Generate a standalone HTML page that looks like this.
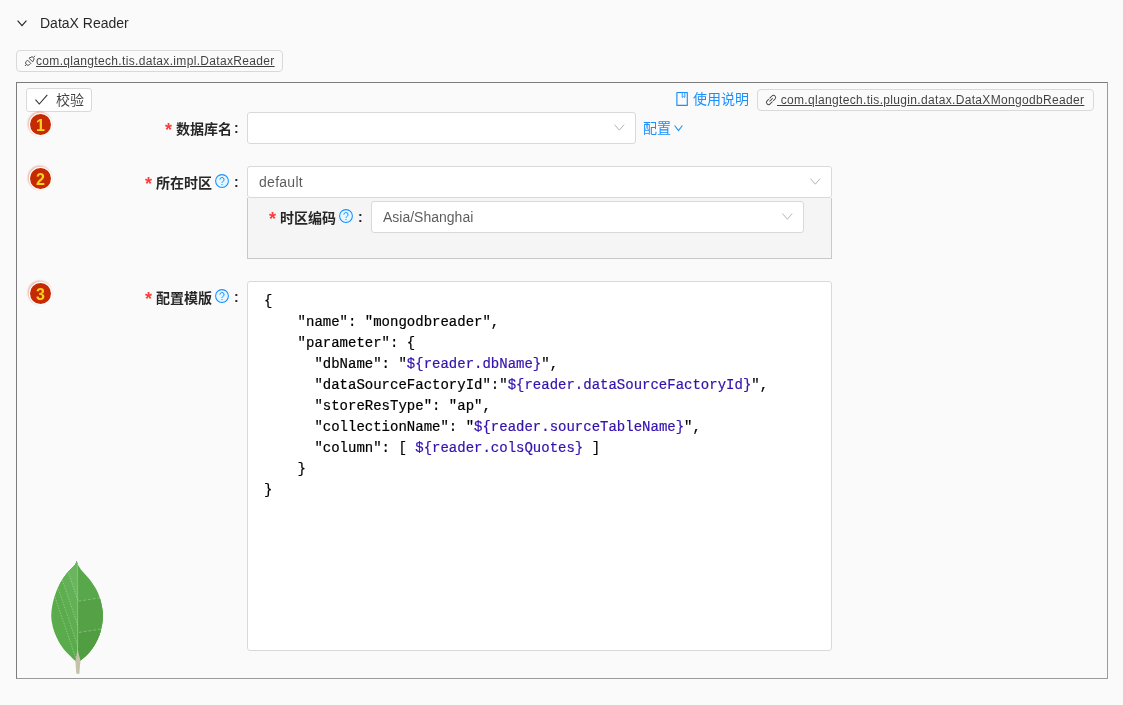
<!DOCTYPE html>
<html lang="zh-CN">
<head>
<meta charset="utf-8">
<title>DataX Reader</title>
<style>
html,body{margin:0;padding:0;}
body{width:1123px;height:705px;overflow:hidden;background:#fafafa;position:relative;
  font-family:"Liberation Sans","Noto Sans CJK SC",sans-serif;font-size:14px;color:rgba(0,0,0,.85);}
.abs{position:absolute;white-space:nowrap;}
.hdr{left:40px;top:12px;height:22px;line-height:22px;font-size:14px;color:rgba(0,0,0,.85);}
.tag{box-sizing:border-box;border:1px solid #d9d9d9;border-radius:4px;background:#fafafa;font-size:12px;line-height:20px;height:22px;color:rgba(0,0,0,.75);letter-spacing:.33px;}
.tag u{text-decoration:underline;text-underline-offset:1px;white-space:pre;}
.main{left:16px;top:82px;width:1092px;height:597px;box-sizing:border-box;border:1px solid #9a9a9a;border-top-color:#7c7c7c;border-left-color:#7c7c7c;}
.btn{box-sizing:border-box;left:26px;top:88px;width:66px;height:24px;border:1px solid #d9d9d9;border-radius:3px;background:#fff;}
.badge{width:21px;height:21px;border-radius:50%;background:#c62a02;color:#ffd21e;font-weight:bold;font-size:16px;line-height:23px;text-align:center;box-shadow:0 0 0 1.2px rgba(255,255,255,.95),-0.8px -0.8px 1.5px 1.6px rgba(198,42,2,.3);}
.lbl{font-weight:bold;font-size:14px;line-height:32px;height:32px;color:rgba(0,0,0,.85);}
.star{color:#fa3b3d;font-family:"Liberation Sans",sans-serif;font-size:18px;line-height:32px;height:32px;font-weight:bold;}
.sel{box-sizing:border-box;border:1px solid #d9d9d9;border-radius:3px;background:#fff;height:32px;line-height:30px;padding-left:11px;font-size:14px;color:rgba(0,0,0,.65);}
.sub{box-sizing:border-box;left:247px;top:198px;width:585px;height:61px;background:#f5f5f5;border:1px solid #c9c9c9;border-top:none;}
.code{box-sizing:border-box;left:247px;top:281px;width:585px;height:370px;border:1px solid #d9d9d9;border-radius:3px;background:#fff;}
pre{margin:0;position:absolute;left:16px;top:9px;font-family:"Liberation Mono",monospace;font-size:14px;line-height:21px;color:#000;-webkit-text-stroke:.2px;}
pre i{font-style:normal;color:#3512ad;}
.blue{color:#1890ff;}
svg{position:absolute;overflow:visible;}
</style>
</head>
<body>
<div id="root" style="position:absolute;left:0;top:0;width:1123px;height:705px;will-change:transform;">

<!-- header -->
<svg style="left:17px;top:20px" width="10" height="7" viewBox="0 0 10 7"><path d="M0.6 0.6 L5 5.6 L9.4 0.6" fill="none" stroke="#222" stroke-width="1.1"/></svg>
<div class="abs hdr">DataX Reader</div>

<div class="abs tag" style="left:16px;top:50px;width:267px;padding-left:19px;"><u>com.qlangtech.tis.datax.impl.DataxReader</u></div>
<svg style="left:24px;top:55px" width="12" height="12" viewBox="0 0 12 12"><g transform="translate(6 5.9) rotate(-45)" fill="none" stroke="#444" stroke-width="0.9"><path d="M-7.2 0 H-5.2 M-1.2 -2.3 V2.3 H-2.9 A2.3 2.3 0 0 1 -2.9 -2.3 Z M7.2 0 H5.2 M1.2 -2.6 V2.6 L4.4 1.5 Q5.2 0 4.4 -1.5 Z"/></g></svg>

<div class="abs main"></div>

<!-- validate button -->
<div class="abs btn"></div>
<svg style="left:35px;top:94px" width="13" height="11" viewBox="0 0 13 11"><path d="M0.5 5.6 L4.3 10 L12.3 0.8" fill="none" stroke="#333" stroke-width="1.1"/></svg>
<div class="abs" style="left:56px;top:90px;line-height:21px;font-size:14px;color:rgba(0,0,0,.75)">校验</div>

<!-- top-right -->
<svg style="left:676px;top:91px" width="13" height="16" viewBox="676 91 13 16"><path d="M676.9 92.5 H687.3 V105.4 H676.9 Z" fill="none" stroke="#1890ff" stroke-width="1.15" stroke-linejoin="round"/><path d="M682.2 92.5 V97.5 L683.5 96.4 L684.8 97.5 V92.5" fill="none" stroke="#1890ff" stroke-width="0.9"/></svg>
<div class="abs blue" style="left:693px;top:88px;line-height:22px;font-size:14px;">使用说明</div>
<div class="abs tag" style="left:757px;top:89px;width:337px;padding-left:19px;"><u> com.qlangtech.tis.plugin.datax.DataXMongodbReader</u></div>
<svg style="left:765px;top:94px" width="12" height="12" viewBox="0 0 12 12"><g transform="translate(6.05 5.95) rotate(-45) scale(.86)" fill="none" stroke="#444" stroke-width="1.1"><path d="M-1 -2.5 H-4 A2.5 2.5 0 0 0 -4 2.5 H0 M1 2.5 H4 A2.5 2.5 0 0 0 4 -2.5 H0 M-2.6 0 H2.6"/></g></svg>

<!-- row 1 -->
<div class="abs badge" style="left:30px;top:114px;">1</div>
<div class="abs star" style="left:165px;top:114px;">*</div>
<div class="abs lbl" style="left:176px;top:113px;">数据库名</div>
<div class="abs lbl" style="left:234px;top:112px;">:</div>
<div class="abs sel" style="left:247px;top:112px;width:389px;"></div>
<svg style="left:614px;top:124px" width="11" height="7" viewBox="0 0 11 7"><path d="M0.5 0.6 L5.3 6.2 L10.1 0.6" fill="none" stroke="#b5b5b5" stroke-width="1"/></svg>
<div class="abs blue" style="left:643px;top:117px;line-height:22px;">配置</div>
<svg style="left:674px;top:125px" width="9" height="7" viewBox="0 0 9 7"><path d="M0.6 0.5 L4.5 5.6 L8.4 0.5" fill="none" stroke="#1890ff" stroke-width="1.1"/></svg>

<!-- row 2 -->
<div class="abs badge" style="left:30px;top:168px;">2</div>
<div class="abs star" style="left:145px;top:168px;">*</div>
<div class="abs lbl" style="left:156px;top:167px;">所在时区</div>
<svg style="left:215px;top:174px" width="14" height="14" viewBox="0 0 14 14"><circle cx="7" cy="7" r="6.4" fill="#e6f7ff" stroke="#1890ff" stroke-width="1.05"/><path d="M4.9 5.6 a2.1 2.1 0 1 1 2.9 1.9 q-0.8 0.4 -0.8 1.3 M7 10 v1.1" fill="none" stroke="#1890ff" stroke-width="1"/></svg>
<div class="abs lbl" style="left:234px;top:166px;">:</div>
<div class="abs sel" style="left:247px;top:166px;width:585px;letter-spacing:.28px">default</div>
<svg style="left:810px;top:178px" width="11" height="7" viewBox="0 0 11 7"><path d="M0.5 0.6 L5.3 6.2 L10.1 0.6" fill="none" stroke="#b5b5b5" stroke-width="1"/></svg>

<div class="abs sub"></div>
<div class="abs star" style="left:269px;top:203px;">*</div>
<div class="abs lbl" style="left:280px;top:202px;">时区编码</div>
<svg style="left:339px;top:209px" width="14" height="14" viewBox="0 0 14 14"><circle cx="7" cy="7" r="6.4" fill="#e6f7ff" stroke="#1890ff" stroke-width="1.05"/><path d="M4.9 5.6 a2.1 2.1 0 1 1 2.9 1.9 q-0.8 0.4 -0.8 1.3 M7 10 v1.1" fill="none" stroke="#1890ff" stroke-width="1"/></svg>
<div class="abs lbl" style="left:358px;top:201px;">:</div>
<div class="abs sel" style="left:371px;top:201px;width:433px;">Asia/Shanghai</div>
<svg style="left:782px;top:213px" width="11" height="7" viewBox="0 0 11 7"><path d="M0.5 0.6 L5.3 6.2 L10.1 0.6" fill="none" stroke="#b5b5b5" stroke-width="1"/></svg>

<!-- row 3 -->
<div class="abs badge" style="left:30px;top:283px;">3</div>
<div class="abs star" style="left:145px;top:283px;">*</div>
<div class="abs lbl" style="left:156px;top:282px;">配置模版</div>
<svg style="left:215px;top:289px" width="14" height="14" viewBox="0 0 14 14"><circle cx="7" cy="7" r="6.4" fill="#e6f7ff" stroke="#1890ff" stroke-width="1.05"/><path d="M4.9 5.6 a2.1 2.1 0 1 1 2.9 1.9 q-0.8 0.4 -0.8 1.3 M7 10 v1.1" fill="none" stroke="#1890ff" stroke-width="1"/></svg>
<div class="abs lbl" style="left:234px;top:281px;">:</div>
<div class="abs code"><pre>{
    "name": "mongodbreader",
    "parameter": {
      "dbName": "<i>${reader.dbName}</i>",
      "dataSourceFactoryId":"<i>${reader.dataSourceFactoryId}</i>",
      "storeResType": "ap",
      "collectionName": "<i>${reader.sourceTableName}</i>",
      "column": [ <i>${reader.colsQuotes}</i> ]
    }
}</pre></div>

<!-- leaf -->
<svg style="left:45px;top:555px" width="65" height="125" viewBox="45 555 65 125">
  <defs>
    <clipPath id="lfL"><path d="M76.5 561.0 C76.2 561.6 76.4 562.9 75.0 564.7 C73.6 566.6 70.2 569.4 68.0 572.1 C65.8 574.8 63.6 577.5 61.6 580.8 C59.6 584.1 57.6 588.2 56.1 591.9 C54.6 595.6 53.6 599.2 52.8 602.9 C52.0 606.6 51.4 610.8 51.3 614.0 C51.1 617.2 51.4 619.5 51.9 622.4 C52.4 625.3 53.1 628.4 54.2 631.6 C55.4 634.8 56.9 638.5 58.8 641.7 C60.6 644.9 63.1 648.4 65.3 651.0 C67.5 653.6 70.0 655.7 71.7 657.4 C73.4 659.1 74.8 660.5 75.4 661.1 L77.7 661.5 L77.7 563.5 Z"/></clipPath>
    <clipPath id="lfR"><path d="M76.5 561.0 C76.9 561.9 77.8 564.5 78.7 566.1 C79.6 567.7 80.1 568.6 81.9 570.7 C83.7 572.9 86.8 575.8 89.3 579.0 C91.8 582.2 94.8 586.6 96.6 590.0 C98.4 593.4 99.3 595.9 100.3 599.3 C101.3 602.7 102.2 607.3 102.6 610.3 C103.0 613.2 103.0 614.7 102.9 617.0 C102.8 619.3 102.8 621.2 102.2 624.2 C101.6 627.2 100.8 631.6 99.4 635.3 C98.0 639.0 95.9 643.1 93.9 646.3 C91.9 649.5 89.6 652.3 87.4 654.6 C85.2 656.9 82.1 659.3 81.0 660.2 L77.7 661.5 L77.7 563.5 Z"/></clipPath>
  </defs>
  <g clip-path="url(#lfL)">
    <rect x="45" y="555" width="33" height="110" fill="#5aab4c"/>
    <path d="M58.4 589.1 L77.7 645.6 L77.7 555 L58.4 555 Z" fill="#5eae50"/>
    <path d="M62.5 580.4 L77.7 625.3 L77.7 555 L62.5 555 Z" fill="#63b156"/>
    <path d="M68.5 573 L77.7 600 L77.7 555 L68.5 555 Z" fill="#6bb55e"/>
    <g fill="none" stroke="rgba(255,255,255,.6)" stroke-width="0.55" stroke-dasharray="1.4 1.3">
      <path d="M68.5 573 L77.7 600"/>
      <path d="M62.5 580.4 L77.7 625.3"/>
      <path d="M58.4 589.1 L77.7 645.6"/>
      <path d="M55.1 597.4 L76.5 660"/>
    </g>
  </g>
  <g clip-path="url(#lfR)">
    <rect x="77.7" y="555" width="30" height="110" fill="#58a74a"/>
    <path d="M77.7 601.2 L104 597.3 L104 665 L77.7 665 Z" fill="#55a246"/>
    <path d="M77.7 632.7 L104 628.6 L104 665 L77.7 665 Z" fill="#519e42"/>
    <g fill="none" stroke="rgba(255,255,255,.5)" stroke-width="0.55" stroke-dasharray="3 1.8">
      <path d="M78.4 601.1 L104 597.3"/>
      <path d="M78.9 632.5 L104 628.6"/>
    </g>
  </g>
  <path d="M77.6 562 L77.7 648" fill="none" stroke="rgba(255,255,255,.4)" stroke-width="0.5"/>
  <path d="M77.5 647.3 C77 652 76.4 657 75.4 661.1 L76.3 673.5 L79.3 674 L80.5 660.2 C79 656 78.2 652 77.5 647.3 Z" fill="#c5c2aa"/>
</svg>

</div>
</body>
</html>
